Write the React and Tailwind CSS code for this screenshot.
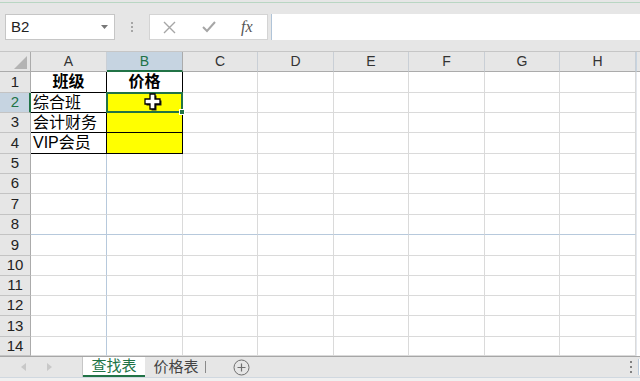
import React from 'react';

const cols = ['A', 'B', 'C', 'D', 'E', 'F', 'G', 'H'];
const colW = ['w-[76px]', 'w-[76px]', 'w-[75px]', 'w-[76px]', 'w-[75px]', 'w-[76px]', 'w-[75px]', 'w-[76px]'];
const rowH = ['h-[21px]', 'h-[20px]', 'h-[20px]', 'h-[21px]', 'h-[20px]', 'h-[20px]', 'h-[21px]', 'h-[20px]', 'h-[21px]', 'h-[20px]', 'h-[20px]', 'h-[20px]', 'h-[21px]', 'h-[19px]'];

const data = {
  '0-0': { text: '班级', bold: true },
  '0-1': { text: '价格', bold: true },
  '1-0': { text: '综合班' },
  '2-0': { text: '会计财务' },
  '3-0': { text: 'VIP会员' },
};

const plus = '6,1 11,1 11,6 16,6 16,11 11,11 11,16 6,16 6,11 1,11 1,6 6,6';

function Cell({ r, c }) {
  const d = data[`${r}-${c}`];
  const inTable = r < 4 && c < 2;
  const yellow = r >= 1 && r < 4 && c === 1;
  const blueRight = c === 0 && r >= 4;
  const blueBottom = r === 7;
  let cls = `${colW[c]} shrink-0 relative border-r border-b `;
  cls += inTable ? 'border-black ' : 'border-[#dadada] ';
  if (blueRight) cls = cls.replace('border-r ', 'border-r border-r-[#b7c9dc] ');
  if (blueBottom) cls += 'border-b-[#b7c9dc] ';
  if (yellow) cls += 'bg-[#ffff00] ';
  else cls += 'bg-white ';
  return (
    <div className={cls}>
      {d && (
        <div
          className={`h-full flex items-center text-[16px] leading-none text-black ${
            d.bold ? 'font-bold justify-center' : 'pl-[2px]'
          }`}
        >
          {d.text}
        </div>
      )}
      {r === 1 && c === 1 && (
        <>
          <div className="absolute -left-[1px] -top-[1px] w-[77px] h-[21px] border-2 border-[#217346]" />
          <div className="absolute -right-[3px] -bottom-[3px] w-[6px] h-[6px] bg-[#217346] border border-white z-10" />
          <svg className="absolute left-[37px] top-0" width="19" height="18" viewBox="0 0 19 18">
            <polygon points={plus} fill="#222" transform="translate(1.5,1.5)" />
            <polygon points={plus} fill="#fff" stroke="#000" strokeWidth="1.3" />
          </svg>
        </>
      )}
    </div>
  );
}

export default function App() {
  return (
    <div
      className="w-[640px] h-[381px] overflow-hidden bg-[#e6e6e6] flex flex-col"
      style={{ fontFamily: '"Liberation Sans", "Noto Sans CJK SC", sans-serif' }}
    >
      <div className="h-[2px] bg-[#e6e6e6]" />
      <div className="h-[1px] bg-[#b9d6c3]" />

      {/* Formula bar */}
      <div className="h-[49px] flex items-start pt-[11px] border-b border-[#c6c6c6]">
        <div className="ml-[5px] w-[110px] h-[26px] bg-white border border-[#c6c6c6] flex items-center justify-between pl-[5px] pr-[6px]">
          <span className="text-[15px] text-[#222]">B2</span>
          <svg width="7" height="4" viewBox="0 0 7 4">
            <polygon points="0,0 7,0 3.5,4" fill="#777" />
          </svg>
        </div>
        <div className="w-[34px] h-[26px] flex items-center justify-center">
          <div className="flex flex-col gap-[2px]">
            <span className="w-[2px] h-[2px] bg-[#a6a6a6]" />
            <span className="w-[2px] h-[2px] bg-[#a6a6a6]" />
            <span className="w-[2px] h-[2px] bg-[#a6a6a6]" />
          </div>
        </div>
        <div className="w-[119px] h-[26px] bg-white border border-[#d4d4d4] flex items-center">
          <svg className="ml-[13px]" width="13" height="13" viewBox="0 0 13 13">
            <path d="M1 1 L12 12 M12 1 L1 12" stroke="#a6a6a6" strokeWidth="1.4" />
          </svg>
          <svg className="ml-[26px]" width="14" height="12" viewBox="0 0 14 12">
            <path d="M1 6 L5 10 L13 1" stroke="#a6a6a6" strokeWidth="2" fill="none" />
          </svg>
          <span
            className="ml-[25px] text-[16px] italic text-[#555] leading-none"
            style={{ fontFamily: '"Liberation Serif", serif' }}
          >
            fx
          </span>
        </div>
        <div className="ml-[3px] flex-1 h-[26px] bg-white border-l border-[#b0c4d8]" />
      </div>

      {/* Column header */}
      <div className="h-[20px] flex bg-[#e6e6e6]">
        <div className="w-[31px] shrink-0 relative border-r border-b border-[#ababab]">
          <svg className="absolute right-[3px] bottom-[2px]" width="13" height="13" viewBox="0 0 13 13">
            <polygon points="13,0 13,13 0,13" fill="#b4b4b4" />
          </svg>
        </div>
        {cols.map((c, i) => (
          <div
            key={c}
            className={`${colW[i]} shrink-0 flex items-center justify-center text-[14px] border-r ${
              c === 'B'
                ? 'bg-[#c6d4e1] text-[#217346] border-b-2 border-b-[#217346] border-r-[#ababab]'
                : 'text-[#333] border-b border-[#ababab] border-r-[#c9cfd6]'
            }`}
          >
            {c}
          </div>
        ))}
        <div className="flex-1 border-b border-[#ababab] border-l border-l-[#c6d4e1]" />
      </div>

      {/* Grid */}
      <div className="flex flex-col">
        {rowH.map((h, r) => (
          <div key={r} className={`${h} flex`}>
            <div
              className={`w-[31px] shrink-0 flex items-center justify-center text-[15px] border-b border-[#c3c3c3] border-r ${
                r === 1
                  ? 'bg-[#c6d4e1] text-[#217346] border-r-2 border-r-[#217346] pl-[1px]'
                  : 'bg-[#e6e6e6] text-[#222] border-r-[#ababab]'
              }`}
            >
              {r + 1}
            </div>
            {cols.map((_, c) => (
              <Cell key={c} r={r} c={c} />
            ))}
            <div className="flex-1 bg-white border-l border-[#e4e8ee]" />
          </div>
        ))}
      </div>

      {/* Sheet tabs */}
      <div className="h-[21px] flex items-stretch border-t border-[#a6a6a6] bg-[#e6e6e6]">
        <div className="w-[83px] shrink-0 flex items-center border-r border-[#c6c6c6]">
          <svg className="ml-[21px]" width="5" height="8" viewBox="0 0 5 8">
            <polygon points="5,0 5,8 0,4" fill="#c8c8c8" />
          </svg>
          <svg className="ml-[21px]" width="5" height="8" viewBox="0 0 5 8">
            <polygon points="0,0 0,8 5,4" fill="#c8c8c8" />
          </svg>
        </div>
        <div className="w-[62px] shrink-0 bg-white border-b-2 border-[#217346] flex items-center justify-center text-[15px] text-[#217346]">
          查找表
        </div>
        <div className="w-[60px] shrink-0 flex items-center justify-center text-[15px] text-[#444] pl-[2px]">
          价格表
        </div>
        <div className="w-[1px] my-[4px] bg-[#8a8a8a]" />
        <div className="w-[70px] flex items-center justify-center">
          <svg width="17" height="17" viewBox="0 0 17 17">
            <circle cx="8.5" cy="8.5" r="7.5" fill="none" stroke="#6f6f6f" strokeWidth="1" />
            <path d="M8.5 4.5 V12.5 M4.5 8.5 H12.5" stroke="#6f6f6f" strokeWidth="1.2" />
          </svg>
        </div>
        <div className="flex-1" />
        <div className="w-[14px] flex items-center justify-center">
          <div className="flex flex-col gap-[3px]">
            <span className="w-[2px] h-[2px] bg-[#808080]" />
            <span className="w-[2px] h-[2px] bg-[#808080]" />
            <span className="w-[2px] h-[2px] bg-[#808080]" />
          </div>
        </div>
        <div className="w-[2px] my-[2px] bg-white border-l border-[#b9c9da]" />
      </div>
      <div className="flex-1 bg-[#f0f0f0] border-t border-[#d0d8e0]" />
    </div>
  );
}
